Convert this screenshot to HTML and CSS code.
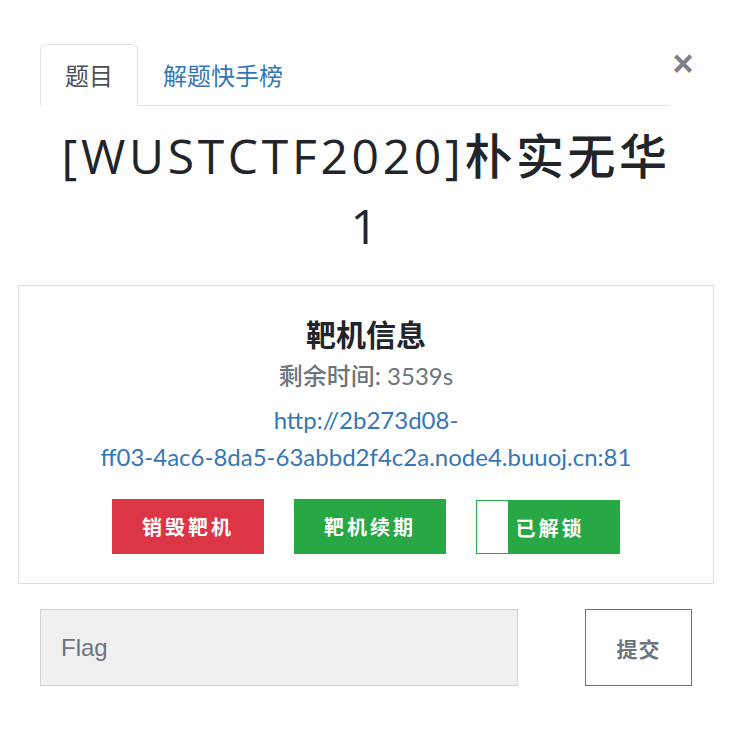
FILE: index.html
```html
<!DOCTYPE html>
<html lang="zh-CN">
<head>
<meta charset="utf-8">
<title>[WUSTCTF2020]朴实无华</title>
<link rel="stylesheet" href="styles.css">
</head>
<body>
<div class="modal">
  <div class="tab-row">
    <ul class="nav-tabs">
      <li class="tab active">题目</li>
      <li class="tab">解题快手榜</li>
    </ul>
    <span class="close">×</span>
  </div>
  <h2 class="challenge-name"><span class="latin">[WUSTCTF2020]</span><span class="cjk">朴实无华</span><br><span class="latin">1</span></h2>
  <div class="card">
    <h5 class="card-title">靶机信息</h5>
    <p class="muted"><span class="label">剩余时间:</span> 3539s</p>
    <p class="link"><a href="#">http://2b273d08-<br>ff03-4ac6-8da5-63abbd2f4c2a.node4.buuoj.cn:81</a></p>
    <div class="actions">
      <span class="btn btn-red">销毁靶机</span>
      <span class="btn btn-green">靶机续期</span>
      <span class="btn btn-green btn-unlocked">已解锁</span>
    </div>
  </div>
  <div class="submit-row">
    <div class="flag-input">Flag</div>
    <span class="submit">提交</span>
  </div>
</div>
</body>
</html>
```
FILE: styles.css
```css
html, body {
  margin: 0;
  padding: 0;
  background: #fff;
}
body {
  font-family: "Lato", "Noto Sans CJK SC", sans-serif;
  font-size: 24px;
  color: #212529;
}
.modal {
  padding: 44px 20px 40px 18px;
}
.tab-row {
  display: flex;
  align-items: flex-start;
  padding-left: 22px;
}
.nav-tabs {
  list-style: none;
  margin: 0;
  padding: 0;
  display: flex;
  width: 630px;
  border-bottom: 1px solid #dee2e6;
}
.tab {
  padding: 12px 24px;
  line-height: 36px;
  border: 1px solid transparent;
  border-top-left-radius: 6px;
  border-top-right-radius: 6px;
  margin-bottom: -1px;
  color: #3477b8;
  font-family: "Noto Sans CJK SC", sans-serif;
}
.tab.active {
  color: #495057;
  border-color: #dee2e6 #dee2e6 #fff;
  background: #fff;
}
.close {
  margin-left: 1px;
  margin-top: 0;
  font-size: 36px;
  line-height: 40px;
  font-weight: 700;
  color: #7f7f7f;
  font-family: "Liberation Sans", sans-serif;
  width: 24px;
  text-align: center;
}
.challenge-name {
  margin: 12px 0 24px;
  text-align: center;
  font-size: 48px;
  line-height: 70px;
  font-weight: 400;
}
.latin {
  font-family: "Open Sans", sans-serif;
  font-weight: 400;
  letter-spacing: 3.7px;
}
.cjk {
  font-family: "Noto Sans CJK SC", sans-serif;
  font-weight: 500;
  letter-spacing: 3.5px;
}
.card {
  border: 1px solid #dfdfdf;
  padding: 29px 30px 29px;
  text-align: center;
}
.card-title {
  margin: 0 0 7px;
  font-size: 30px;
  line-height: 36px;
  font-weight: 700;
  font-family: "Noto Sans CJK SC", sans-serif;
}
.muted {
  margin: 0 0 7px;
  line-height: 36px;
  color: #6c757d;
}
.label {
  font-weight: 500;
}
.link {
  margin: 0 0 24px;
  line-height: 37px;
}
.link a {
  color: #3477b8;
  text-decoration: none;
}
.actions {
  display: flex;
  justify-content: center;
  gap: 30px;
}
.btn {
  position: relative;
  display: flex;
  align-items: center;
  justify-content: center;
  width: 152px;
  height: 55px;
  color: #fff;
  font-family: "Noto Sans CJK SC", sans-serif;
  font-weight: 700;
  font-size: 20px;
  letter-spacing: 3px;
  box-sizing: border-box;
}
.btn-red {
  background: #dc3545;
}
.btn-green {
  background: #28a745;
}
.btn-unlocked {
  width: 144px;
  height: 54px;
  margin-top: 1px;
  border: 1px solid #28a745;
  padding-left: 4px;
}
.btn-unlocked::before {
  content: "";
  position: absolute;
  left: 0;
  top: 0;
  bottom: 0;
  width: 31px;
  background: #fff;
}
.submit-row {
  display: flex;
  align-items: stretch;
  margin: 25px 0 0 22px;
  width: 652px;
  justify-content: space-between;
}
.flag-input {
  width: 478px;
  height: 77px;
  box-sizing: border-box;
  background: #f0f0f0;
  border: 1px solid #ced4da;
  padding-left: 20px;
  display: flex;
  align-items: center;
  font-family: "Liberation Sans", sans-serif;
  font-size: 24px;
  color: #6c757d;
}
.submit {
  width: 107px;
  height: 77px;
  box-sizing: border-box;
  border: 1px solid #6c757d;
  display: flex;
  align-items: center;
  justify-content: center;
  font-family: "Noto Sans CJK SC", sans-serif;
  font-weight: 700;
  font-size: 21px;
  color: #6c757d;
  letter-spacing: 1px;
}
```
